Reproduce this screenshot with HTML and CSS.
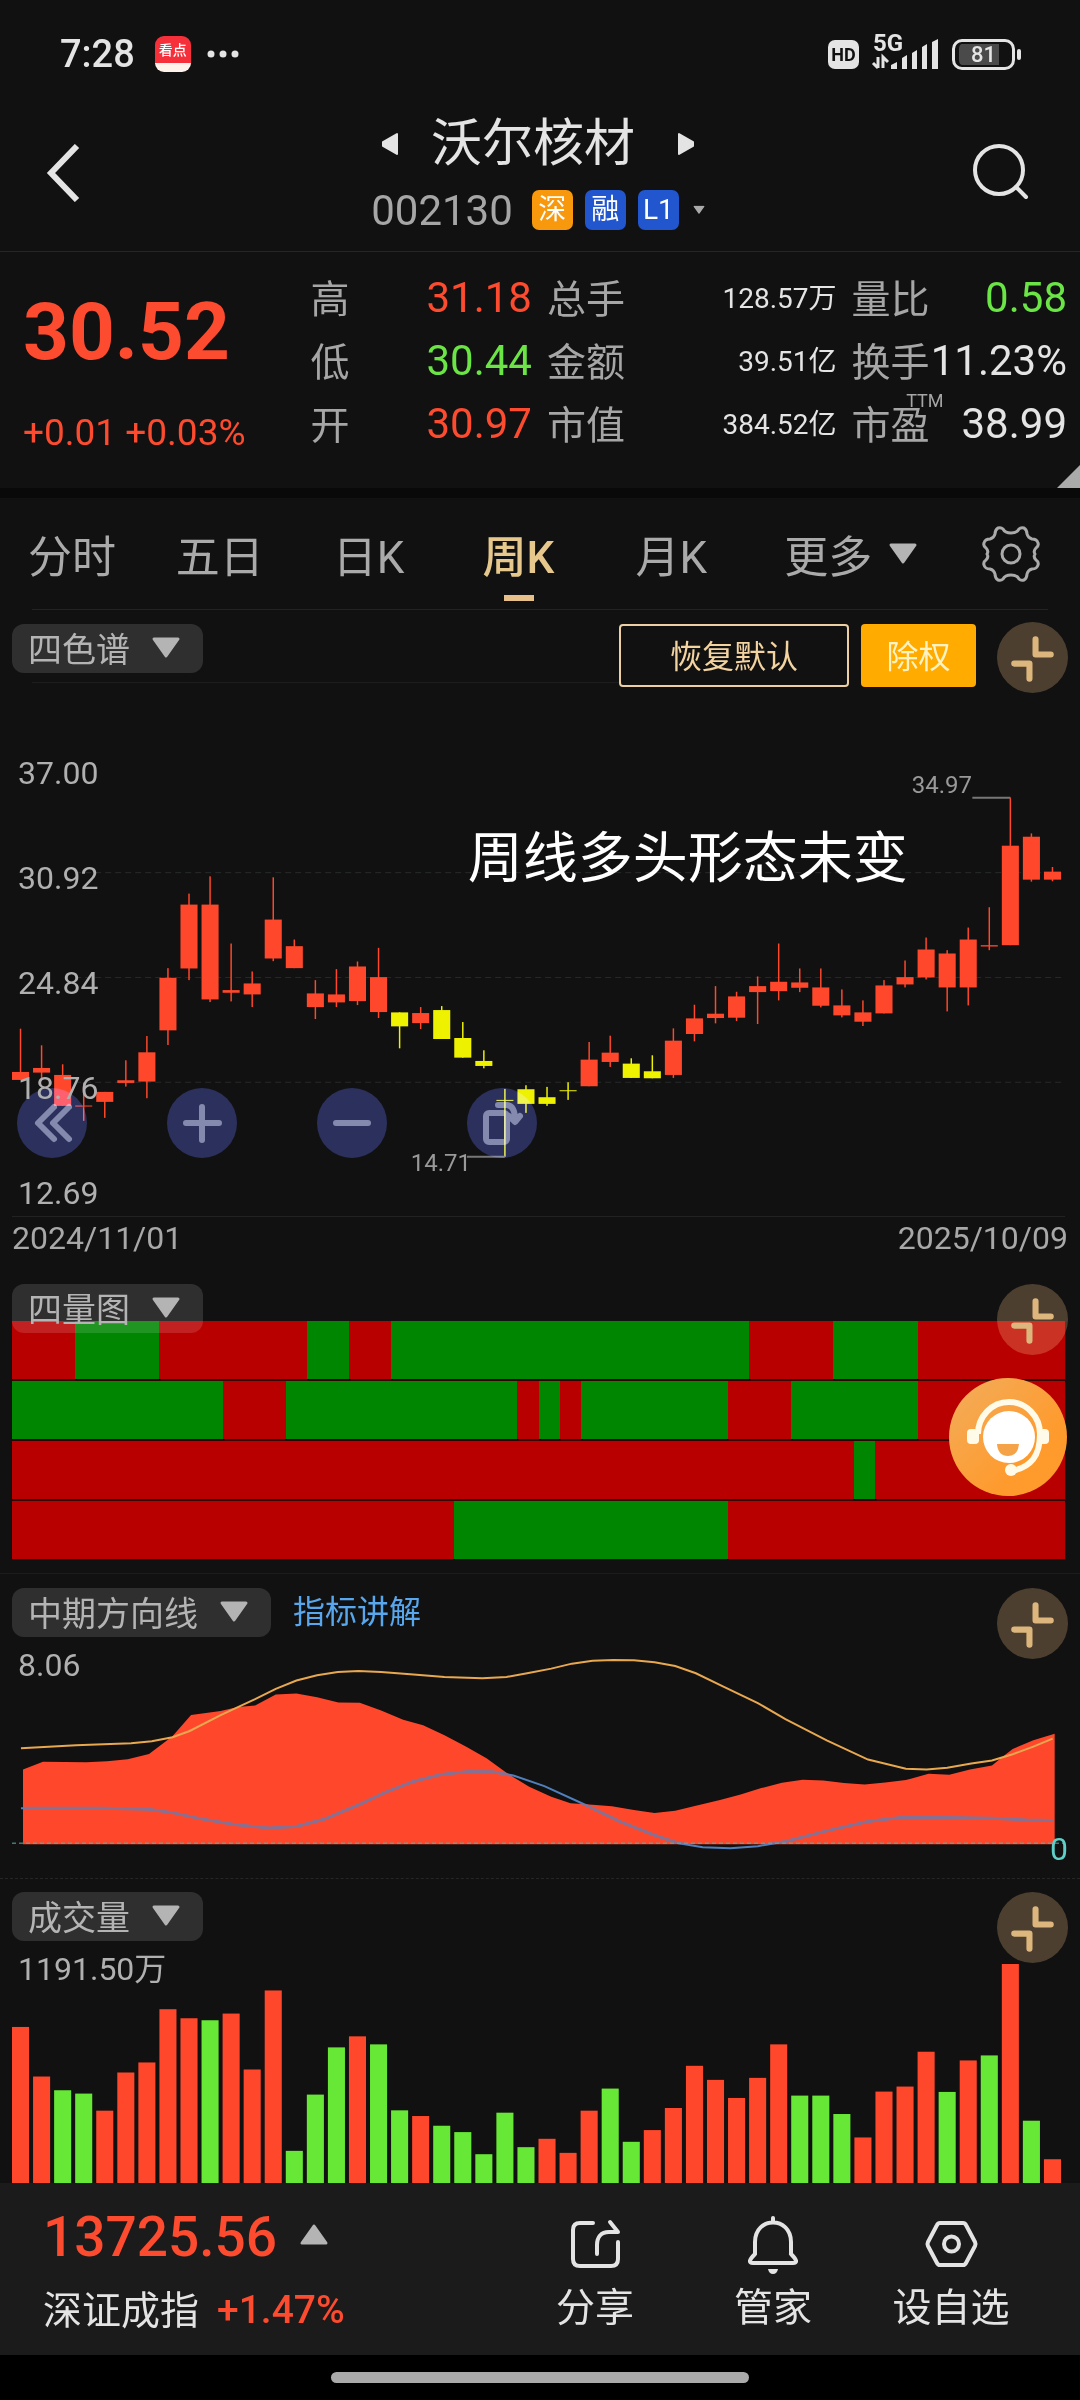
FILE: index.html
```html
<!DOCTYPE html>
<html lang="zh-CN">
<head>
<meta charset="utf-8">
<meta name="viewport" content="width=device-width, initial-scale=1">
<title>沃尔核材 002130</title>
<link rel="stylesheet" href="styles.css">
</head>
<body>
<svg class="defs" aria-hidden="true">
  <symbol id="i-down" viewBox="0 0 30 22"><path d="M3 2h24L15 19z" fill="currentColor" stroke="currentColor" stroke-width="3" stroke-linejoin="round"/></symbol>
  <symbol id="i-up" viewBox="0 0 30 22"><path d="M3 20h24L15 3z" fill="currentColor" stroke="currentColor" stroke-width="3" stroke-linejoin="round"/></symbol>
  <symbol id="i-fold" viewBox="0 0 70 70"><path d="M38 17v15h15M32 56V41H17" fill="none" stroke="currentColor" stroke-width="6" stroke-linecap="round" stroke-linejoin="round"/></symbol>
</svg>
<div class="app">
  <div class="status">
    <span class="time">7:28</span>
    <span class="appicon"><b>看点</b></span>
    <svg class="dots" viewBox="0 0 32 8"><circle cx="4" cy="4" r="3.5"/><circle cx="16" cy="4" r="3.5"/><circle cx="28" cy="4" r="3.5"/></svg>
    <span class="hd">HD</span>
    <svg class="signal" viewBox="0 0 68 42">
      <text x="2" y="21">5G</text>
      <path d="M7 27v11M2 33l5 5M12 38V27l5 5" fill="none" stroke="currentColor" stroke-width="3"/>
      <path d="M20 39v-4l6-3v7zM31 39V28l5-3v14zM41 39V23l5-3v19zM51 39V17l5-3v25zM61 39V12l6-3v30z" fill="currentColor"/>
    </svg>
    <span class="battery">81</span>
  </div>

  <header class="header">
    <button class="icon-btn" aria-label="返回"><svg class="back" viewBox="0 0 34 58"><path d="M31 2 5 29l26 27" fill="none" stroke="currentColor" stroke-width="6"/></svg></button>
    <div class="stock">
      <div class="stock-name">
        <button class="icon-btn" aria-label="上一个"><svg class="step" viewBox="0 0 18 24"><path d="M16 2v20L2 14v-4z" fill="currentColor" stroke="currentColor" stroke-width="2" stroke-linejoin="round"/></svg></button>
        <h1>沃尔核材</h1>
        <button class="icon-btn" aria-label="下一个"><svg class="step" viewBox="0 0 18 24"><path d="M2 2v20l14-8v-4z" fill="currentColor" stroke="currentColor" stroke-width="2" stroke-linejoin="round"/></svg></button>
      </div>
      <div class="stock-code">
        <span class="code">002130</span>
        <span class="badge orange">深</span><span class="badge">融</span><span class="badge">L1</span>
        <svg class="mini" viewBox="0 0 30 22"><use href="#i-down"/></svg>
      </div>
    </div>
    <button class="icon-btn end" aria-label="搜索"><svg class="search" viewBox="0 0 58 58"><circle cx="27" cy="27" r="24" fill="none" stroke="currentColor" stroke-width="4"/><path d="m44 44 10 10" stroke="currentColor" stroke-width="4" stroke-linecap="round"/></svg></button>
  </header>

  <section class="quote">
    <div class="price up"><strong>30.52</strong><span>+0.01 +0.03%</span></div>
    <dl><div><dt>高</dt><dd class="up">31.18</dd></div><div><dt>低</dt><dd class="down">30.44</dd></div><div><dt>开</dt><dd class="up">30.97</dd></div></dl>
    <dl class="small"><div><dt>总手</dt><dd>128.57万</dd></div><div><dt>金额</dt><dd>39.51亿</dd></div><div><dt>市值</dt><dd>384.52亿</dd></div></dl>
    <dl><div><dt>量比</dt><dd class="down">0.58</dd></div><div><dt>换手</dt><dd>11.23%</dd></div><div><dt>市盈<sup>TTM</sup></dt><dd>38.99</dd></div></dl>
  </section>

  <nav class="tabs">
    <button>分时</button><button>五日</button><button>日K</button><button class="on">周K</button><button>月K</button>
    <button>更多<svg class="tri" viewBox="0 0 30 22"><use href="#i-down"/></svg></button>
    <button aria-label="设置"><svg class="gear" viewBox="0 0 60 60"><path d="M30 9q6 0 8-4 2-2 5-1 3 2 3 6 1 4 5 5 5 0 6 4 1 3-2 5-3 3-1 6-2 3 1 6 3 2 2 5-1 4-6 4-4 1-5 5 0 4-3 6-3 1-5-1-2-4-8-4-6 0-8 4-2 2-5 1-3-2-3-6-1-4-5-5-5 0-6-4-1-3 2-5 3-3 1-6 2-3-1-6-3-2-2-5 1-4 6-4 4-1 5-5 0-4 3-6 3-1 5 1 2 4 8 4z" fill="none" stroke="currentColor" stroke-width="3" stroke-linejoin="round"/><circle cx="30" cy="30" r="9" fill="none" stroke="currentColor" stroke-width="3"/></svg></button>
  </nav>

  <section class="panel price-panel">
    <div class="tools">
      <button class="pill">四色谱<svg class="tri" viewBox="0 0 30 22"><use href="#i-down"/></svg></button>
      <button class="box reset">恢复默认</button>
      <button class="box adjust">除权</button>
      <button class="fold" aria-label="收起"><svg viewBox="0 0 70 70"><use href="#i-fold"/></svg></button>
    </div>
    <div class="plot candles">
      <svg id="candles" viewBox="0 0 50 1575" preserveAspectRatio="none"></svg>
      <p class="caption">周线多头形态未变</p>
      <span class="mark high">34.97</span><span class="mark low">14.71</span>
      <div class="zoomers">
        <button aria-label="向左"><svg viewBox="0 0 70 70"><path d="M37 19 21 35l16 16M52 19 36 35l16 16"/></svg></button>
        <button aria-label="放大"><svg viewBox="0 0 70 70"><path d="M35 19v33M19 35h33"/></svg></button>
        <button aria-label="缩小"><svg viewBox="0 0 70 70"><path d="M19 35h32"/></svg></button>
        <button aria-label="横屏"><svg viewBox="0 0 70 70"><rect x="19" y="25" width="21" height="29" rx="3"/><path d="M31 17h9q8 1 8 15m-6-4 6 6 5-6"/></svg></button>
      </div>
      <div class="scale"><span>37.00</span><span>30.92</span><span>24.84</span><span>18.76</span><span>12.69</span></div>
    </div>
    <div class="dates"><time>2024/11/01</time><time>2025/10/09</time></div>
  </section>

  <section class="panel heat-panel">
    <div class="heat" id="heat"></div>
    <div class="tools over">
      <button class="pill">四量图<svg class="tri" viewBox="0 0 30 22"><use href="#i-down"/></svg></button>
      <button class="fold" aria-label="收起"><svg viewBox="0 0 70 70"><use href="#i-fold"/></svg></button>
    </div>
    <button class="service" aria-label="客服"><svg viewBox="0 0 118 118">
      <path d="M29 56a31 32 0 0 1 62 0c0 22-9 33-28 37" fill="none" stroke="#fffbe8" stroke-width="6"/>
      <rect x="18" y="51" width="12" height="15" rx="4" fill="#fffbe8"/><rect x="88" y="51" width="12" height="15" rx="4" fill="#fffbe8"/>
      <circle cx="62" cy="92" r="6" fill="#fffbe8"/><circle cx="60" cy="59" r="26" fill="#fff"/><path d="M48 66h22q-1 12-11 12T48 66z" fill="#f5a348"/>
    </svg></button>
  </section>

  <section class="panel trend-panel">
    <div class="tools">
      <button class="pill">中期方向线<svg class="tri" viewBox="0 0 30 22"><use href="#i-down"/></svg></button>
      <a class="explain" href="#explain">指标讲解</a>
      <button class="fold" aria-label="收起"><svg viewBox="0 0 70 70"><use href="#i-fold"/></svg></button>
    </div>
    <div class="plot trend">
      <svg id="trend" viewBox="17 264 1529 663" preserveAspectRatio="none"></svg>
      <span class="top-value">8.06</span><span class="zero">0</span>
    </div>
  </section>

  <section class="panel volume-panel">
    <div class="tools">
      <button class="pill">成交量<svg class="tri" viewBox="0 0 30 22"><use href="#i-down"/></svg></button>
      <button class="fold" aria-label="收起"><svg viewBox="0 0 70 70"><use href="#i-fold"/></svg></button>
    </div>
    <div class="plot volume">
      <svg id="volume" viewBox="0 249 50 660" preserveAspectRatio="none"></svg>
      <span class="top-value">1191.50万</span>
    </div>
  </section>

  <footer class="footer">
    <div class="index">
      <div class="index-value up">13725.56<svg class="tri" viewBox="0 0 30 22"><use href="#i-up"/></svg></div>
      <div class="index-name">深证成指<span class="up">+1.47%</span></div>
    </div>
    <div class="actions">
      <button><svg viewBox="0 0 60 60"><path d="M28 9H15q-7 0-7 7v29q0 7 7 7h31q7 0 7-7V28M32 40V31c0-8 4-13 12-13h9M45 8l8 10h-9"/></svg>分享</button>
      <button><svg viewBox="0 0 60 60"><path d="M30 4v4M12 40V28C12 2 48 2 48 28v12M12 40q-9 9-2 9h40q7 0-2-9"/><path d="M25 55h10q-1 5-5 5t-5-5z" fill="currentColor" stroke="none"/></svg>管家</button>
      <button><svg viewBox="0 0 60 60"><path d="M19 9h23q2 0 3 2l9 17q1 2 0 4l-9 17q-1 2-3 2H19q-2 0-3-2L7 32q-1-2 0-4l9-17q1-2 3-2z"/><circle cx="30.500" cy="30" r="7.500"/></svg>设自选</button>
    </div>
  </footer>
  <div class="home"><span></span></div>
</div>
<script src="charts.js"></script>
</body>
</html>
```
FILE: styles.css
```css
* { box-sizing: border-box; }
body { margin: 0; background: #000; color: #e4e4e4; font-family: Roboto, "Noto Sans CJK SC", sans-serif; }
h1, p, dl, dd { margin: 0; font-weight: 400; }
button { padding: 0; border: 0; background: none; color: inherit; font: inherit; cursor: pointer; }
svg { display: block; }
.defs { position: absolute; width: 0; height: 0; }
.app { background: #111; }
.up { color: #fc4b2e; }
.down { color: #6be545; }
.tri { width: 30px; height: 22px; color: #b4b4b4; }

.status { display: flex; align-items: center; height: 108px; padding: 0 57px 0 60px; }
.time { font-size: 38px; font-weight: 500; }
.appicon { display: flex; justify-content: center; width: 36px; height: 36px; margin: 0 16px 0 20px; border-radius: 9px; background: linear-gradient(#f5303a 74%, #fff3ec 74%); }
.appicon b { color: #fff; font-size: 14px; line-height: 28px; font-weight: 500; }
.dots { width: 32px; height: 8px; fill: currentColor; }
.hd { width: 31px; margin-left: auto; border-radius: 7px; background: #e4e4e4; color: #111; font-size: 18px; font-weight: 700; line-height: 29px; text-align: center; }
.signal { width: 68px; height: 42px; margin: 0 13px 6px 12px; overflow: visible; }
.signal text { font-size: 24px; font-weight: 700; fill: currentColor; }
.battery { position: relative; width: 63px; height: 31px; margin-right: 8px; border: 3px solid #e4e4e4; border-radius: 10px; background: linear-gradient(90deg, #4a4a4a 81%, #111 81%) content-box; padding: 2px 4px; font-size: 22px; font-weight: 500; line-height: 22px; text-align: center; }
.battery::after { content: ""; position: absolute; top: 7px; right: -9px; width: 4px; height: 11px; border-radius: 2px; background: #e4e4e4; }

.header { display: grid; grid-template-columns: 1fr auto 1fr; align-items: start; justify-items: start; height: 144px; padding: 0 50px 0 46px; border-bottom: 1px solid #262626; }
.header .end { justify-self: end; }
.back { width: 34px; height: 58px; margin-top: 36px; }
.search { width: 58px; height: 58px; margin-top: 35px; }
.stock { display: flex; flex-direction: column; align-items: center; }
.stock-name { display: flex; align-items: center; gap: 32px; height: 72px; }
.stock-name h1 { padding-right: 10px; font-size: 51px; line-height: 72px; }
.step { width: 18px; height: 24px; }
.stock-code { display: flex; align-items: center; gap: 12px; height: 60px; }
.code { margin-right: 7px; color: #a6a6a6; font-size: 42px; }
.badge { width: 41px; border-radius: 7px; background: #2156cf; color: #fff; font-size: 28px; line-height: 40px; text-align: center; }
.badge.orange { background: #f8980c; }
.mini { width: 12px; height: 10px; margin-left: 2px; color: #aaa; }

.quote { position: relative; display: grid; grid-template-columns: minmax(0, 272fr) minmax(0, 221fr) minmax(0, 289fr) minmax(0, 215fr); gap: 15px; padding: 14px 13px 33px 23px; border-bottom: 10px solid #090909; }
.quote::after { content: ""; position: absolute; right: 0; bottom: 0; border: solid transparent; border-width: 0 0 23px 23px; border-bottom-color: #aaa; }
.price { display: flex; flex-direction: column; gap: 35px; padding-top: 18px; white-space: nowrap; }
.price strong { font-size: 80px; line-height: 96px; }
.price span { font-size: 37px; line-height: 36px; }
.quote dl > div { display: flex; align-items: center; justify-content: space-between; height: 63px; white-space: nowrap; }
.quote dt { position: relative; padding-bottom: 4px; color: #a6a6a6; font-size: 39px; }
.quote dd { font-size: 42px; }
.quote .small dd { padding-bottom: 4px; font-size: 28px; }
.quote sup { position: absolute; right: -14px; top: -2px; font-size: 18px; line-height: 18px; }

.tabs { display: grid; grid-template-columns: 144fr 152fr 146fr 154fr 152fr 208fr 112fr; height: 112px; padding-right: 13px; color: #aaa; font-size: 44px; background: linear-gradient(#232323, #232323) center bottom / calc(100% - 64px) 1px no-repeat; }
.tabs button { position: relative; display: flex; align-items: center; justify-content: center; gap: 16px; }
.tabs .on { color: #e6c88c; font-weight: 500; }
.tabs .on::after { content: ""; position: absolute; bottom: 9px; width: 30px; height: 6px; background: #e6c088; }
.gear { width: 60px; height: 60px; }

.panel { position: relative; padding: 0 12px; }
.tools { display: flex; align-items: flex-start; height: 70px; }
.tools.over { position: absolute; top: 24px; left: 12px; right: 12px; }
.pill { display: flex; align-items: center; gap: 21px; height: 49px; padding: 0 22px 2px 16px; border-radius: 12px; background: rgba(255, 255, 255, .13); color: #b4b4b4; font-size: 34px; }
.fold { width: 71px; height: 71px; margin-left: auto; border-radius: 50%; background: rgba(255, 205, 140, .25); color: #dcb67c; }
.fold svg { width: 71px; height: 71px; }
.box { height: 63px; padding-bottom: 3px; border-radius: 4px; font-size: 32px; }
.reset { width: 230px; margin-left: auto; border: 2px solid #ecd0a4; color: #f3d3a0; }
.adjust { width: 115px; margin-left: 12px; background: #ffab00; color: #fff3c4; }
.price-panel { padding-top: 12px; }
.price-panel .tools { background: linear-gradient(#1d1d1d, #1d1d1d) 20px 60px / 590px 1px no-repeat; }
.price-panel .pill, .price-panel .box { margin-top: 2px; }
.price-panel .fold { margin-left: 21px; }
.plot { position: relative; margin-right: 3px; }
.plot > svg { width: 100%; height: 100%; }
.candles { height: 525px; border-bottom: 1px solid #222; }
.scale { position: absolute; top: 62px; left: 6px; display: flex; flex-direction: column; gap: 67px; color: #b0b0b0; font-size: 32px; line-height: 38px; }
.caption { position: absolute; left: 43%; top: 126px; padding-left: 3px; color: #fff; font-size: 55px; line-height: 80px; white-space: nowrap; }
.mark { position: absolute; color: #999; font-size: 24px; line-height: 28px; }
.high { right: 93px; top: 79px; }
.low { right: 594px; bottom: 39px; }
.zoomers { position: absolute; left: 5px; bottom: 58px; display: flex; gap: 80px; mix-blend-mode: screen; }
.zoomers button { width: 70px; height: 70px; border-radius: 50%; background: #1c2250; color: #7b82a8; }
.zoomers svg { fill: none; stroke: currentColor; stroke-width: 6; stroke-linecap: round; stroke-linejoin: round; }
.dates { display: flex; justify-content: space-between; color: #a8a8a8; font-size: 32px; line-height: 43px; }

.heat-panel { padding-top: 61px; padding-bottom: 14px; border-bottom: 1px solid #1c1c1c; }
.heat { display: flex; flex-direction: column; gap: 2px; margin-right: 3px; background: #300; }
.heat-row { display: flex; height: 58px; }
.heat-row .r { background: #b80000; }
.heat-row .g { background: #008600; }
.service { position: absolute; top: 118px; right: 13px; width: 118px; height: 118px; border-radius: 50%; background: linear-gradient(135deg, #f2ad5c, #ff9a2c 70%); }

.trend-panel { padding-top: 14px; border-bottom: 1px dashed #262626; }
.explain { margin-left: 22px; color: #58a6ec; font-size: 32px; line-height: 49px; text-decoration: none; }
.trend { height: 220px; }
.top-value { position: absolute; left: 6px; top: -12px; color: #b0b0b0; font-size: 32px; line-height: 38px; }
.zero { position: absolute; right: -3px; bottom: 10px; color: #5fd0c8; font-size: 32px; line-height: 38px; }
.volume-panel { padding-top: 13px; }
.volume { height: 221px; }

.footer { display: flex; justify-content: space-between; height: 172px; padding: 0 40px 0 43px; background: #1b1b1b; }
.index-value { display: flex; align-items: center; gap: 22px; height: 88px; padding-top: 20px; font-size: 55px; font-weight: 500; }
.index-value .tri { margin-bottom: 6px; }
.index-name { display: flex; align-items: center; gap: 18px; height: 72px; font-size: 39px; }
.index-name span { padding-top: 6px; font-weight: 500; }
.actions { display: grid; grid-template-columns: repeat(3, 178px); font-size: 39px; }
.actions button { display: flex; flex-direction: column; align-items: center; gap: 2px; padding-top: 31px; line-height: 64px; }
.actions svg { width: 60px; height: 60px; fill: none; stroke: currentColor; stroke-width: 4; stroke-linecap: round; stroke-linejoin: round; }
.home { display: flex; justify-content: center; height: 44px; padding-top: 17px; background: #000; }
.home span { width: 418px; height: 11px; border-radius: 6px; background: #aaa; }

.grid { stroke: #262a28; stroke-width: 1; stroke-dasharray: 6 4; vector-effect: non-scaling-stroke; }
.fill-r { fill: #ff482b; }
.fill-g { fill: #68e836; }
.fill-y { fill: #eef200; }
.leader { fill: none; stroke: #777; stroke-width: 2; vector-effect: non-scaling-stroke; }
.line { fill: none; stroke-width: 2; vector-effect: non-scaling-stroke; }
.amber { stroke: #e8a850; }
.blue { stroke: #8a7090; stroke-width: 3; }
.blue-out { stroke: #4f80bd; }
.base { stroke: #5fb0a8; stroke-width: 1; stroke-dasharray: 4 3; vector-effect: non-scaling-stroke; }
```
FILE: charts.js
```js
// One row per week: high, body top, body bottom, low, colour.
const weeks = `868,998,1022,1022,r 918,986,1000,1022,r 975,1007,1100,1100,r 1030,1099,1102,1145,r 1058,1058,1088,1136,r
963,1023,1031,1042,r 890,939,1027,1077,r 686,715,873,917,r 462,495,687,722,r 410,495,780,788,r
612,752,760,786,r 696,732,765,803,r 413,540,657,665,r 600,620,686,686,r 722,762,803,839,r
689,765,789,803,r 666,681,785,797,r 625,713,818,836,r 819,819,861,927,y 803,821,851,869,r
800,812,899,899,y 848,896,955,955,y 933,965,980,987,y 1049,1082,1085,1253,y 1038,1050,1094,1121,y
1043,1074,1094,1100,y 1029,1053,1056,1082,y 908,961,1041,1041,r 889,940,968,983,r 957,973,1016,1016,y
948,996,1017,1017,y 867,904,1007,1016,r 796,837,884,906,r 740,823,836,852,r 757,771,835,845,r
711,740,758,854,r 612,727,755,783,r 687,729,745,758,r 687,744,799,804,r 750,798,828,834,r
783,819,847,860,r 722,738,822,822,r 663,713,735,744,r 594,630,714,720,r 632,642,744,816,r
564,600,744,798,r 503,617,621,632,r 173,318,617,617,r 281,291,420,426,r 382,396,420,425,r`.split(/\s+/).map(w => w.split(","));

const rect = (x, y, w, h, c) => `<rect x="${x}" y="${y}" width="${w}" height="${h}" class="fill-${c}"/>`;
const PAD = 144;
let out = [399, 714, 1029].map(y => `<line class="grid" x1="3" x2="50" y1="${y + PAD}" y2="${y + PAD}"/>`).join("");
weeks.forEach(([h, t, b, l, c], i) => {
  out += rect(i + 0.37, +h + PAD, 0.07, l - h, c) + rect(i, +t + PAD, 0.81, b - t, c);
});
out += `<path class="leader" d="M45.6 ${174 + PAD}H47.4M21.600 ${1253 + PAD}H23.400"/>`;
document.getElementById("candles").innerHTML = out;

const volumes = "443r 591r 632g 642g 693r 579r 549r 390r 417r 423g 403r 570r 334r 813g 645g 504g 471r 495g 692g 709r 738g 757g 823g 699g 802g 777r 819r 693r 627g 786g 751r 685r 559r 601r 655r 595r 495r 648g 648g 703g 773r 636r 621r 517r 637g 543r 528g 255r 723g 838r".split(" ");
document.getElementById("volume").innerHTML = volumes.map((v, i) => {
  const top = parseInt(v, 10);
  return rect(i, top, 0.81, 909 - top, v.slice(-1));
}).join("");

// Run lengths of each signal row, in weeks.
const heat = ["3r 4g 7r 2g 2r 17g 4r 4g 7r", "10g 3r 11g 1r 1g 1r 7g 3r 6g 7r", "40r 1g 9r", "21r 13g 16r"];
document.getElementById("heat").innerHTML = heat.map(row => `<div class="heat-row">${row.split(" ").map(s =>
  `<span class="${s.slice(-1)}" style="flex:${parseInt(s, 10)}"></span>`).join("")}</div>`).join("");

const area = "33,600 62,577 125,578 155,575 185,569 216,553 250,500 277,436 320,424 345,412 370,407 400,374 430,371 460,382 491,398 522,399 553,422 585,450 614,467 645,497 676,531 706,566 737,613 768,652 800,682 828,702 860,706 888,711 920,722 950,731 980,724 1010,709 1045,692 1075,675 1105,656 1135,640 1165,631 1195,633 1225,641 1255,645 1285,639 1315,632 1348,613 1378,616 1408,600 1440,588 1455,562 1470,538 1500,512 1531,492 1531,825 33,825";
const amber = "30,536 110,527 190,521 220,515 250,503 275,484 320,436 370,388 400,357 430,332 460,316 490,306 520,303 553,306 600,314 645,321 700,325 735,321 765,310 800,296 830,281 860,272 890,270 920,271 950,277 980,288 1010,310 1050,350 1100,400 1140,448 1200,512 1260,570 1315,598 1345,600 1375,595 1410,582 1440,573 1470,554 1500,531 1528,507";
const blue = "30,717 150,717 215,720 250,730 290,748 340,766 390,776 430,772 470,750 520,707 560,668 600,636 640,615 680,606 715,607 745,618 790,650 850,707 900,757 950,798 985,822 1020,834 1060,837 1100,831 1140,817 1200,785 1260,757 1310,744 1370,745 1440,747 1490,752 1528,754";
document.getElementById("trend").innerHTML =
  `<clipPath id="inside"><polygon points="${area}"/></clipPath>
   <polygon class="fill-r" points="${area}"/>
   <polyline class="line amber" points="${amber}"/>
   <polyline class="line blue-out" points="${blue}"/>
   <polyline class="line blue" clip-path="url(#inside)" points="${blue}"/>
   <line class="base" x1="17" x2="1546" y1="822" y2="822"/>`;
```
